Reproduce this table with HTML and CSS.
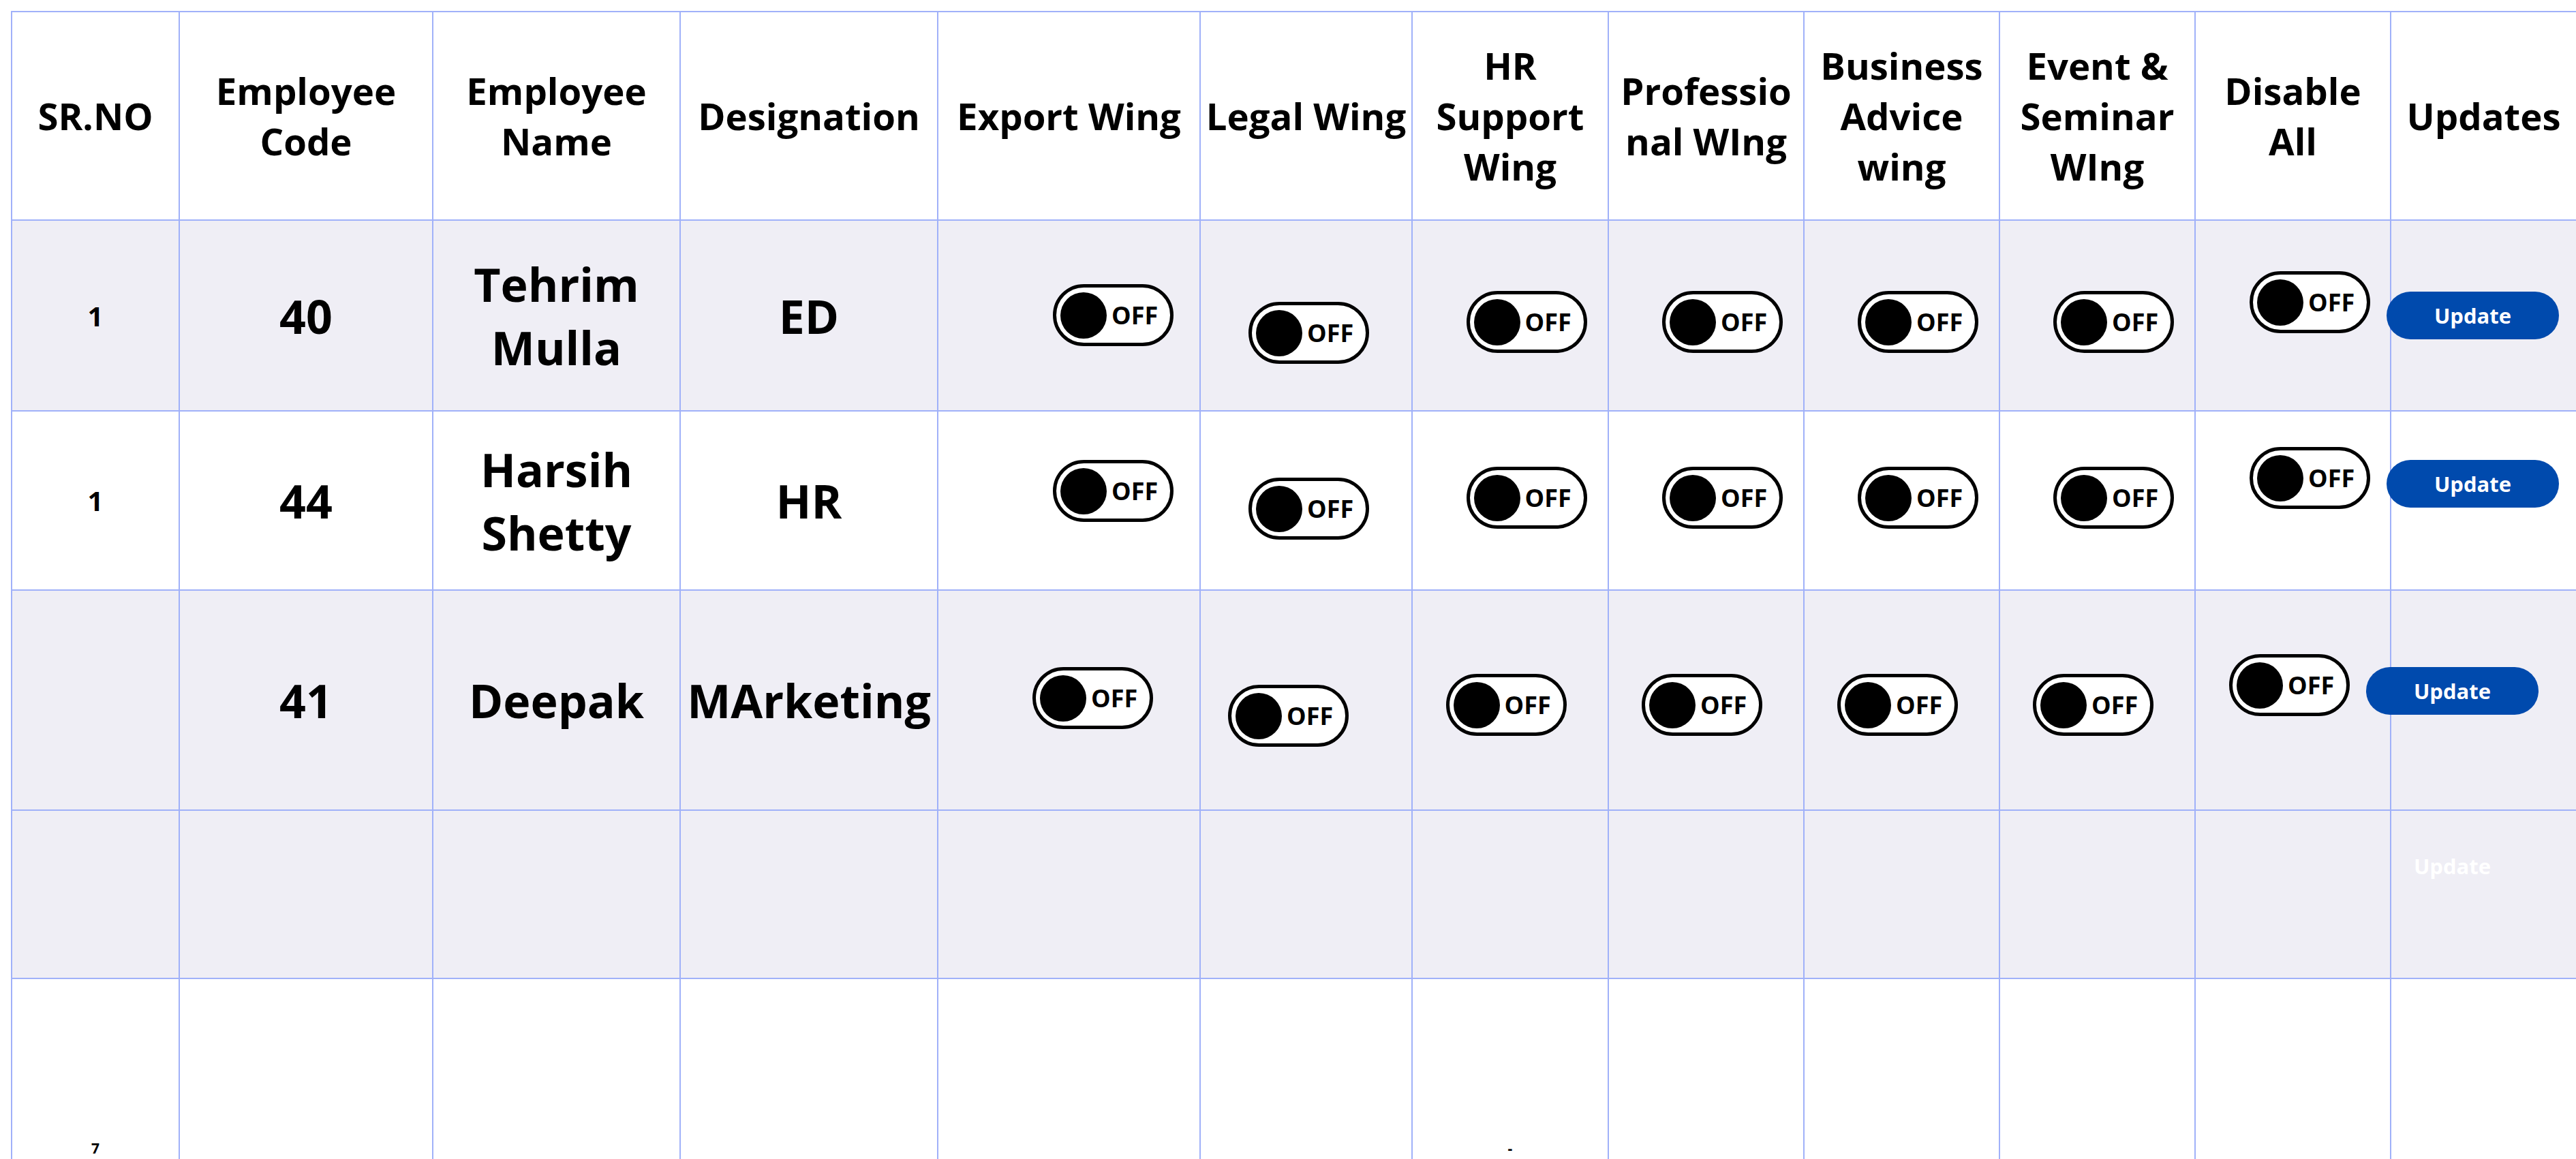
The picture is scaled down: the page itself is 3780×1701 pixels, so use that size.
FILE: index.html
```html
<!DOCTYPE html>
<html lang="en">
<head>
<meta charset="utf-8">
<title>Employee Wings</title>
<link rel="stylesheet" href="styles.css">
</head>
<body>
<div class="sheet">
  <div class="row head">
    <div class="cell th">SR.NO</div>
    <div class="cell th">Employee Code</div>
    <div class="cell th">Employee Name</div>
    <div class="cell th">Designation</div>
    <div class="cell th">Export Wing</div>
    <div class="cell th">Legal Wing</div>
    <div class="cell th">HR Support Wing</div>
    <div class="cell th">Professional WIng</div>
    <div class="cell th">Business Advice wing</div>
    <div class="cell th">Event &amp; Seminar WIng</div>
    <div class="cell th">Disable All</div>
    <div class="cell th">Updates</div>
  </div>

  <div class="row gray r1">
    <div class="cell sr">1</div>
    <div class="cell td">40</div>
    <div class="cell td">Tehrim Mulla</div>
    <div class="cell td">ED</div>
    <div class="cell sw c-export"><span class="toggle"><span class="knob"></span><span class="toggle-label">OFF</span></span></div>
    <div class="cell sw c-legal"><span class="toggle"><span class="knob"></span><span class="toggle-label">OFF</span></span></div>
    <div class="cell sw c-wing"><span class="toggle"><span class="knob"></span><span class="toggle-label">OFF</span></span></div>
    <div class="cell sw c-wing"><span class="toggle"><span class="knob"></span><span class="toggle-label">OFF</span></span></div>
    <div class="cell sw c-wing"><span class="toggle"><span class="knob"></span><span class="toggle-label">OFF</span></span></div>
    <div class="cell sw c-wing"><span class="toggle"><span class="knob"></span><span class="toggle-label">OFF</span></span></div>
    <div class="cell sw c-disable"><span class="toggle"><span class="knob"></span><span class="toggle-label">OFF</span></span></div>
    <div class="cell sw c-update"><button class="btn" type="button">Update</button></div>
  </div>

  <div class="row white r2">
    <div class="cell sr">1</div>
    <div class="cell td">44</div>
    <div class="cell td">Harsih Shetty</div>
    <div class="cell td">HR</div>
    <div class="cell sw c-export"><span class="toggle"><span class="knob"></span><span class="toggle-label">OFF</span></span></div>
    <div class="cell sw c-legal"><span class="toggle"><span class="knob"></span><span class="toggle-label">OFF</span></span></div>
    <div class="cell sw c-wing"><span class="toggle"><span class="knob"></span><span class="toggle-label">OFF</span></span></div>
    <div class="cell sw c-wing"><span class="toggle"><span class="knob"></span><span class="toggle-label">OFF</span></span></div>
    <div class="cell sw c-wing"><span class="toggle"><span class="knob"></span><span class="toggle-label">OFF</span></span></div>
    <div class="cell sw c-wing"><span class="toggle"><span class="knob"></span><span class="toggle-label">OFF</span></span></div>
    <div class="cell sw c-disable"><span class="toggle"><span class="knob"></span><span class="toggle-label">OFF</span></span></div>
    <div class="cell sw c-update"><button class="btn" type="button">Update</button></div>
  </div>

  <div class="row gray r3">
    <div class="cell sr"></div>
    <div class="cell td">41</div>
    <div class="cell td">Deepak</div>
    <div class="cell td">MArketing</div>
    <div class="cell sw c-export"><span class="toggle"><span class="knob"></span><span class="toggle-label">OFF</span></span></div>
    <div class="cell sw c-legal"><span class="toggle"><span class="knob"></span><span class="toggle-label">OFF</span></span></div>
    <div class="cell sw c-wing"><span class="toggle"><span class="knob"></span><span class="toggle-label">OFF</span></span></div>
    <div class="cell sw c-wing"><span class="toggle"><span class="knob"></span><span class="toggle-label">OFF</span></span></div>
    <div class="cell sw c-wing"><span class="toggle"><span class="knob"></span><span class="toggle-label">OFF</span></span></div>
    <div class="cell sw c-wing"><span class="toggle"><span class="knob"></span><span class="toggle-label">OFF</span></span></div>
    <div class="cell sw c-disable"><span class="toggle"><span class="knob"></span><span class="toggle-label">OFF</span></span></div>
    <div class="cell sw c-update"><button class="btn" type="button">Update</button></div>
  </div>

  <div class="row gray r4">
    <div class="cell"></div>
    <div class="cell"></div>
    <div class="cell"></div>
    <div class="cell"></div>
    <div class="cell"></div>
    <div class="cell"></div>
    <div class="cell"></div>
    <div class="cell"></div>
    <div class="cell"></div>
    <div class="cell"></div>
    <div class="cell"></div>
    <div class="cell sw c-update"><button class="btn ghost" type="button">Update</button></div>
  </div>

  <div class="row white r5">
    <div class="cell tiny">7</div>
    <div class="cell"></div>
    <div class="cell"></div>
    <div class="cell"></div>
    <div class="cell"></div>
    <div class="cell"></div>
    <div class="cell tiny">-</div>
    <div class="cell"></div>
    <div class="cell"></div>
    <div class="cell"></div>
    <div class="cell"></div>
    <div class="cell"></div>
  </div>
</div>
</body>
</html>
```

FILE: styles.css
```css
html, body {
  margin: 0;
  padding: 0;
  background: #ffffff;
  overflow: hidden;
}

body {
  font-family: "Open Sans", "Noto Sans", "Liberation Sans", sans-serif;
  color: #000000;
}

.sheet {
  display: grid;
  grid-template-columns: 244px 370px 361px 376px 383px 309px 286px 285px 285px 285px 285px 271px;
  grid-template-rows: 304px 278px 261px 321px 245px 264px;
  gap: 2px;
  padding: 2px 0 0 2px;
  margin: 16px 0 0 16px;
  width: max-content;
  background: #a0b1f9;
}

.row {
  display: contents;
}

.cell {
  background: #ffffff;
  min-width: 0;
  overflow: visible;
}

.row.gray > .cell {
  background: #efeef5;
}

.th {
  display: flex;
  align-items: center;
  justify-content: center;
  text-align: center;
  padding: 0 6px;
  font-size: 54.5px;
  font-weight: 700;
  line-height: normal;
  overflow-wrap: anywhere;
}

.td {
  display: flex;
  align-items: center;
  justify-content: center;
  text-align: center;
  padding: 0 10px;
  font-size: 68px;
  font-weight: 700;
  line-height: normal;
}

.sr {
  display: flex;
  align-items: center;
  justify-content: center;
  font-size: 40px;
  font-weight: 700;
}

.tiny {
  display: flex;
  justify-content: center;
  align-items: flex-start;
  padding-top: 234px;
  font-size: 21px;
  font-weight: 700;
  line-height: normal;
}

/* switch cells */
.sw {
  display: flex;
  justify-content: center;
  align-items: flex-start;
}

.r1 { --t: 93px; --dx: 0px; --ut: 104px; }
.r2 { --t: 71px; --dx: 0px; --ut: 71px; }
.r3 { --t: 112px; --dx: -30px; --ut: 112px; }
.r4 { --t: 0px; --dx: -30px; --ut: 46px; }

.toggle {
  display: flex;
  align-items: center;
  flex: none;
  box-sizing: border-box;
  width: 177px;
  height: 91px;
  padding: 0 6px;
  border: 5px solid #000000;
  border-radius: 46px;
  background: #ffffff;
}

.knob {
  flex: none;
  width: 68px;
  height: 68px;
  border-radius: 50%;
  background: #000000;
}

.toggle-label {
  margin-left: 7px;
  font-size: 36px;
  font-weight: 700;
  line-height: 1;
}

.c-export .toggle {
  margin-top: var(--t);
  margin-left: calc(2 * (var(--dx) + 65px));
}

.c-legal .toggle {
  margin-top: calc(var(--t) + 26px);
  margin-left: calc(2 * (var(--dx) + 4px));
}

.c-wing .toggle {
  margin-top: calc(var(--t) + 10px);
  margin-left: calc(2 * (var(--dx) + 24px));
}

.c-disable .toggle {
  margin-top: calc(var(--t) - 19px);
  margin-left: calc(2 * (var(--dx) + 25px));
}

.btn {
  flex: none;
  display: flex;
  align-items: center;
  justify-content: center;
  box-sizing: border-box;
  width: 253px;
  height: 70px;
  padding: 0;
  border: 0;
  border-radius: 35px;
  background: #004aad;
  color: #ffffff;
  font-family: inherit;
  font-size: 31px;
  font-weight: 700;
}

.c-update .btn {
  margin-top: var(--ut);
  margin-left: calc(2 * (var(--dx) - 16px));
}

.btn.ghost {
  background: transparent;
}
```
